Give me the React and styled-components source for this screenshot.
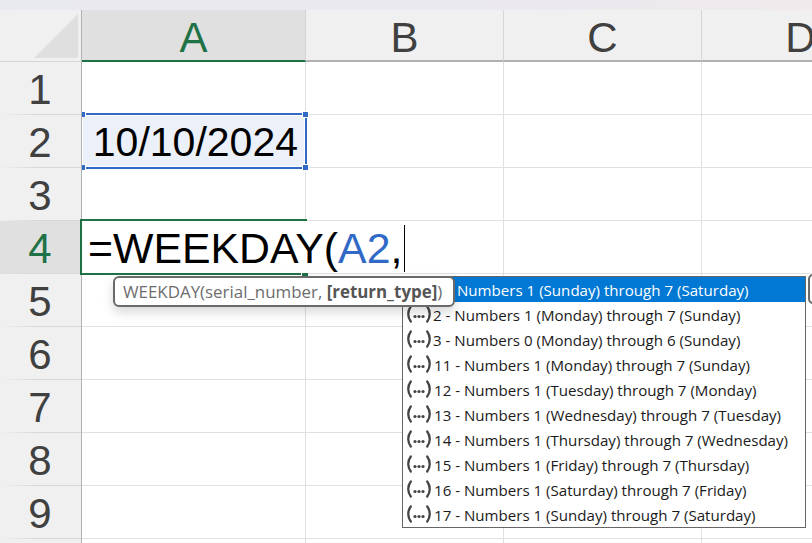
import React from "react";
import styled, { createGlobalStyle } from "styled-components";

const Global = createGlobalStyle`
  html, body { margin: 0; padding: 0; width: 812px; height: 543px; overflow: hidden; background: #fff; }
  * { box-sizing: border-box; }
`;
const Page = styled.div`
  position: relative; width: 812px; height: 543px; overflow: hidden;
  font-family: "Liberation Sans", Arial, sans-serif;
`;
const TopStrip = styled.div`
  height: 10px;
  background: linear-gradient(90deg, #e9eaf0 0%, #ebe9ef 70%, #f0eaec 100%);
`;
const Sheet = styled.div`
  display: grid;
  grid-template-columns: 82px 224px 198px 198px 198px;
  grid-auto-rows: 53px;
  grid-template-rows: 52px;
`;
const Corner = styled.div`
  background: #f0f0f0; border-right: 1px solid #b1b1b1; border-bottom: 1px solid #d6d6d6;
  display: flex; align-items: flex-end; justify-content: flex-end; padding: 0 3px 3px 0;
`;
const ColHead = styled.div`
  display: flex; align-items: center; justify-content: center;
  padding-top: 6px;
  font-size: 42px; line-height: 1;
  background: ${p => p.$active ? "#e0e0e0" : "#f0f0f0"};
  color: ${p => p.$active ? "#1f7246" : "#404040"};
  border-right: 1px solid #d6d6d6;
  border-bottom: ${p => p.$active ? "2px solid #1f7246" : "2px solid #b1b1b1"};
`;
const RowHead = styled.div`
  display: flex; align-items: center; justify-content: center;
  font-size: 42px; line-height: 1;
  padding: 2px 1px 0 0;
  background: linear-gradient(90deg, ${p => p.$active ? "#e0e0e0" : "#f0f0f0"}, #d8d8d8 45%) bottom / 100% 1px no-repeat,
    ${p => p.$active ? "#e0e0e0" : "#f0f0f0"};
  color: ${p => p.$active ? "#1f7246" : "#404040"};
  border-right: 1px solid #b1b1b1;
`;
const Cell = styled.div`
  background: #fff;
  border-right: 1px solid #e0e0e0;
  border-bottom: 1px solid #e0e0e0;
`;
const SelectedCell = styled.div`
  position: relative;
  margin: -2px -1px -1px 0;
  border: 2px solid #3069c6;
  border-left: 0;
  background: #ebf0f9;
  box-shadow: inset 0 0 0 1px #fff;
  font-size: 41px; line-height: 1; color: #000;
  display: flex; align-items: center; justify-content: flex-end;
  padding: 3px 7px 0 0;
  z-index: 1;
`;
const Handle = styled.span`
  position: absolute; height: 5px; background: #3069c6;
  ${p => p.$right
    ? "right: -3px; width: 5px; box-shadow: 0 0 0 1px #fff;"
    : "left: 0; width: 3px; box-shadow: 1px 0 0 #fff;"}
  ${p => p.$bottom ? "bottom: -3px;" : "top: -3px;"}
`;
const EditCell = styled.div`
  position: relative;
  margin: -2px -1px -1px -2px;
  border: 2px solid #1f7246; border-right: 0;
  background: #fff; z-index: 2;
  font-size: 42.8px; line-height: 1; color: #000;
  display: flex; align-items: center;
  padding: 3px 0 0 6px;
  white-space: nowrap;
`;
const Ref = styled.span`color: #3069c6;`;
const Caret = styled.span`
  flex: none; width: 1px; height: 47px; background: #000; margin-left: 2px;
`;
const FillHandle = styled.span`
  position: absolute; right: -1px; bottom: -3px; width: 6px; height: 3px; background: #1f7246;
  box-shadow: -1px 0 0 #fff;
`;
const Tooltip = styled.div`
  position: absolute; left: 113px; top: 276px; width: 342px; height: 31px; z-index: 5;
  background: #fff; border: 2px solid #6a6a6a; border-radius: 6px;
  box-shadow: 0 5px 12px rgba(0,0,0,.16);
  font-family: "Open Sans", "Noto Sans", sans-serif; font-size: 16.9px; color: #6d6d6d;
  display: flex; align-items: center; padding-left: 8px; white-space: nowrap;
  b { color: #555; font-weight: 700; }
`;
const Dropdown = styled.div`
  position: absolute; left: 402px; top: 276px; width: 404px; height: 252px; z-index: 4;
  background: #fff; border: 1px solid #666;
  display: flex; flex-direction: column;
  font-family: "Open Sans", "Noto Sans", sans-serif; font-size: 15.1px; color: #1a1a1a;
`;
const Option = styled.div`
  height: 25px; flex: none; display: flex; align-items: center; white-space: nowrap;
  padding-left: 4px;
  background: ${p => p.$active ? "#0078d4" : "transparent"};
  color: ${p => p.$active ? "#fff" : "#1a1a1a"};
`;
const OptionIcon = styled.svg`
  width: 26px; height: 20px; flex: none; margin-top: -1px; color: #444;
`;
const OptionText = styled.span`margin-left: ${p => p.$shift}px;`;
const EdgeStub = styled.div`
  position: absolute; left: 808px; top: 274px; width: 12px; height: 30px; z-index: 5;
  background: #fff; border: 2px solid #6a6a6a; border-radius: 5px;
`;

const Ellipsis = () => (
  <OptionIcon viewBox="0 0 26 20">
    <path d="M3.800 2.500C.4 7 .4 13 3.800 17.500M20.200 2.500C23.600 7 23.600 13 20.200 17.500" fill="none" stroke="currentColor" strokeWidth="2.300" strokeLinecap="round" />
    <circle cx="8" cy="12.500" r="1.600" fill="currentColor" />
    <circle cx="12" cy="12.500" r="1.600" fill="currentColor" />
    <circle cx="16" cy="12.500" r="1.600" fill="currentColor" />
  </OptionIcon>
);

const options = [
  "2 - Numbers 1 (Monday) through 7 (Sunday)",
  "3 - Numbers 0 (Monday) through 6 (Sunday)",
  "11 - Numbers 1 (Monday) through 7 (Sunday)",
  "12 - Numbers 1 (Tuesday) through 7 (Monday)",
  "13 - Numbers 1 (Wednesday) through 7 (Tuesday)",
  "14 - Numbers 1 (Thursday) through 7 (Wednesday)",
  "15 - Numbers 1 (Friday) through 7 (Thursday)",
  "16 - Numbers 1 (Saturday) through 7 (Friday)",
  "17 - Numbers 1 (Sunday) through 7 (Saturday)",
];

const CornerMark = () => (
  <svg width="44" height="44" viewBox="0 0 44 44"><path d="M44 0V44H0Z" fill="#dfdfdf" /></svg>
);

const rows = [1,2,3,4,5,6,7,8,9,10];

export default function App() {
  return (
    <Page>
      <Global />
      <TopStrip />
      <Sheet>
        <Corner><CornerMark /></Corner>
        <ColHead $active>A</ColHead>
        <ColHead>B</ColHead>
        <ColHead>C</ColHead>
        <ColHead>D</ColHead>
        {rows.map(r => (
          <React.Fragment key={r}>
            <RowHead $active={r === 4}>{r < 10 ? r : null}</RowHead>
            {r === 2 ? (
              <SelectedCell>
                10/10/2024
                <Handle /><Handle $right /><Handle $bottom /><Handle $right $bottom />
              </SelectedCell>
            ) : r === 4 ? (
              <EditCell>
                =WEEKDAY(<Ref>A2</Ref>,<Caret />
                <FillHandle />
              </EditCell>
            ) : <Cell />}
            <Cell /><Cell /><Cell />
          </React.Fragment>
        ))}
      </Sheet>
      <Tooltip>WEEKDAY(serial_number,&nbsp;<b>[return_type]</b>)</Tooltip>
      <Dropdown>
        <Option $active><OptionText $shift={50}>Numbers 1 (Sunday) through 7 (Saturday)</OptionText></Option>
        {options.map((o, i) => (
          <Option key={o}><Ellipsis /><OptionText $shift={i < 2 ? 0 : 1}>{o}</OptionText></Option>
        ))}
      </Dropdown>
      <EdgeStub />
    </Page>
  );
}
